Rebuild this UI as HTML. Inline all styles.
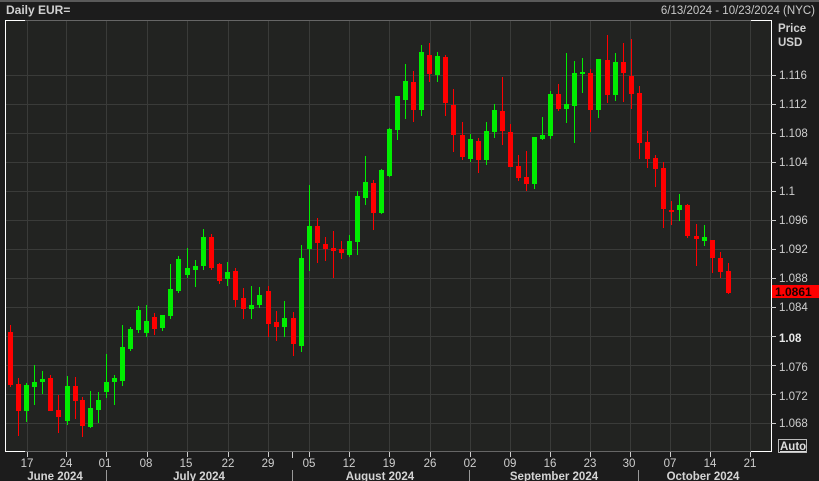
<!DOCTYPE html>
<html><head><meta charset="utf-8"><style>
html,body{margin:0;padding:0;background:#1c1c1c;width:819px;height:481px;overflow:hidden}
svg{display:block}
text{font-family:"Liberation Sans Narrow","Liberation Sans",sans-serif;}
</style></head><body>
<svg id="s" width="819" height="481" xmlns="http://www.w3.org/2000/svg">
<rect x="0" y="0" width="819" height="481" fill="#1c1c1c"/>
<rect x="0" y="0" width="819" height="2" fill="#5a5a5a"/>
<rect x="5" y="20" width="766" height="432" fill="#222321"/>
<g id="grid" stroke="#3a3b39" stroke-width="1"></g>
<g id="c"></g>
<!-- frame -->
<line x1="5" y1="20.5" x2="771" y2="20.5" stroke="#666" />
<line x1="5" y1="451.5" x2="771" y2="451.5" stroke="#666" />
<line x1="5" y1="20.5" x2="25" y2="20.5" stroke="#fff" />
<line x1="751" y1="20.5" x2="771" y2="20.5" stroke="#fff" />
<line x1="5" y1="451.5" x2="25" y2="451.5" stroke="#fff" />
<line x1="751" y1="451.5" x2="771" y2="451.5" stroke="#fff" />
<line x1="5.5" y1="20" x2="5.5" y2="452" stroke="#fff" />
<line x1="771.5" y1="20" x2="771.5" y2="452" stroke="#fff" />
<g id="ax" stroke="#ccc"></g>
<text x="6" y="14" fill="#d0d0d0" font-size="12" font-weight="bold">Daily EUR=</text>
<text x="815" y="14" fill="#c8c8c8" font-size="11.5" text-anchor="end">6/13/2024 - 10/23/2024 (NYC)</text>
<text x="778" y="32" fill="#d0d0d0" font-size="11.5" font-weight="bold">Price</text>
<text x="778" y="46" fill="#d0d0d0" font-size="11.5" font-weight="bold">USD</text>
<g fill="#cfcfcf" font-size="11.5" id="yl">
<text x="779" y="79">1.116</text><text x="779" y="108">1.112</text><text x="779" y="137">1.108</text>
<text x="779" y="166">1.104</text><text x="779" y="195">1.1</text><text x="779" y="224">1.096</text>
<text x="779" y="253">1.092</text><text x="779" y="282">1.088</text><text x="779" y="311">1.084</text>
<text x="779" y="342" font-weight="bold" fill="#e8e8e8">1.08</text><text x="779" y="371">1.076</text>
<text x="779" y="400">1.072</text><text x="779" y="427">1.068</text>
</g>
<rect x="772" y="285" width="47" height="13" fill="#f00"/>
<text x="775" y="296" fill="#1a0000" font-size="12" font-weight="bold">1.0861</text>
<rect x="778.5" y="439.5" width="28" height="13" fill="none" stroke="#bbb"/>
<text x="780" y="450" fill="#ddd" font-size="11.5" font-weight="bold" text-decoration="underline">Auto</text>
<g fill="#cfcfcf" font-size="11.5" text-anchor="middle">
<text x="27" y="467">17</text><text x="66" y="467">24</text><text x="105" y="467">01</text>
<text x="146" y="467">08</text><text x="186" y="467">15</text><text x="228" y="467">22</text>
<text x="268" y="467">29</text><text x="309" y="467">05</text><text x="349" y="467">12</text>
<text x="389" y="467">19</text><text x="430" y="467">26</text><text x="470" y="467">02</text>
<text x="510" y="467">09</text><text x="550" y="467">16</text><text x="590" y="467">23</text>
<text x="629" y="467">30</text><text x="670" y="467">07</text><text x="710" y="467">14</text>
<text x="750" y="467">21</text>
</g>
<g fill="#d4d4d4" font-size="11.5" font-weight="bold" text-anchor="middle">
<text x="55" y="480">June 2024</text><text x="199" y="480">July 2024</text>
<text x="380" y="480">August 2024</text><text x="554" y="480">September 2024</text>
<text x="703" y="480">October 2024</text>
</g>
</svg>
<script>
var ns="http://www.w3.org/2000/svg";
function el(p,t,a){var e=document.createElementNS(ns,t);for(var k in a)e.setAttribute(k,a[k]);p.appendChild(e);return e;}
var g=document.getElementById('grid');
[75,104,133,162,191,220,249,278,307,336,365,394,423].forEach(function(y){el(g,'line',{x1:5,x2:771,y1:y+.5,y2:y+.5});});
var wx=[27,66,106,147,187,228,268,309,349,389,430,470,510,550,590,630,670,710,750];
wx.forEach(function(x){el(g,'line',{x1:x+.5,x2:x+.5,y1:21,y2:451});});
var ax=document.getElementById('ax');
wx.forEach(function(x){el(ax,'line',{x1:x+.5,x2:x+.5,y1:452,y2:457});});
[75,104,133,162,191,220,249,278,307,336,365,394,423].forEach(function(y){el(ax,'line',{x1:771,x2:776,y1:y+.5,y2:y+.5});});
[106,292,469,638].forEach(function(x){el(ax,'line',{x1:x+.5,x2:x+.5,y1:470,y2:481,stroke:'#999'});});
el(ax,'line',{x1:292.5,x2:292.5,y1:452,y2:458});
var d=[
[9.5,332,385,325,387,'r'],[17.5,384,411,378,436,'r'],[25.5,385,411,383,422,'g'],[33.5,382,387,365,405,'g'],
[41.5,379,382,371,394,'g'],[49.5,378,411,375,411,'r'],[57.5,410,417,395,433,'r'],[66.5,386,421,376,425,'g'],
[74.5,386,401,377,419,'r'],[82,400,426,397,437,'r'],[90,408,427,391,428,'g'],[98,400,410,392,423,'g'],
[106,382,392,354,398,'g'],[114,378,382,375,405,'g'],[122,347,381,325,386,'g'],[130,329,349,327,351,'g'],
[138,310,330,306,333,'g'],[146,321,333,305,337,'g'],[154,317,329,313,335,'r'],[162,315,328,315,331,'g'],
[170,289,316,264,319,'g'],[178,259,291,256,293,'g'],[186.5,268,275,248,278,'g'],[195,266,270,260,287,'g'],
[203,237,266,229,270,'g'],[211,237,268,234,270,'r'],[219,264,281,263,284,'r'],[227,272,279,262,286,'g'],
[235,271,300,268,307,'r'],[243,298,309,288,319,'r'],[251,305,309,286,319,'g'],[259,295,305,287,308,'g'],
[267.5,291,324,286,337,'r'],[275.5,322,327,311,341,'r'],[283.5,318,327,301,337,'g'],[292.5,318,344,312,356,'r'],
[300.5,258,346,245,352,'g'],[308.5,226,249,185,271,'g'],[316.5,226,243,218,263,'r'],[324.5,244,249,237,261,'r'],
[332.5,248,251,231,278,'r'],[340.5,249,253,241,259,'r'],[348.5,241,255,235,257,'g'],[356.5,196,242,191,255,'g'],
[364.5,182,198,156,205,'g'],[372.5,183,213,180,230,'r'],[380.5,170,213,169,214,'g'],[388.5,129,176,128,177,'g'],
[397,96,130,96,140,'g'],[405,81,100,64,119,'g'],[413,82,110,71,122,'r'],[421,52,110,45,116,'g'],
[429,55,74,43,82,'r'],[437,56,75,52,82,'g'],[445,57,103,55,116,'r'],[453,105,135,89,152,'r'],
[461.5,135,157,122,160,'r'],[469.5,139,159,134,162,'g'],[477.5,141,160,138,173,'r'],[485.5,131,160,122,165,'g'],
[493.5,110,132,104,138,'g'],[501.5,111,131,77,145,'r'],[509.5,132,167,124,167,'r'],[518,166,178,155,181,'r'],
[526,177,184,151,191,'r'],[534,137,184,137,189,'g'],[542,135,139,117,140,'g'],[550,94,136,91,139,'g'],
[558,94,109,84,111,'r'],[566,104,109,53,123,'g'],[574,73,106,61,143,'g'],[582,72,74,58,93,'g'],
[590,73,110,69,132,'r'],[598,59,110,59,118,'g'],[607,60,95,35,103,'r'],[615,62,95,53,101,'g'],
[623,62,73,43,102,'r'],[631,76,94,39,109,'r'],[639,93,143,86,159,'r'],[647,142,159,131,168,'r'],
[655,158,169,155,187,'r'],[663,168,209,162,228,'r'],[671,210,211,201,225,'r'],[679,205,210,194,221,'g'],
[687,205,236,204,238,'r'],[695.5,236,239,224,266,'r'],[703.5,237,241,225,246,'g'],[711.5,240,258,240,273,'r'],
[720,258,272,252,278,'r'],[728,271,293,263,294,'r']];
var c=document.getElementById('c');
d.forEach(function(a){var col=a[5]=='g'?'#00ee00':'#ff0000';var x=Math.round(a[0]);
el(c,'rect',{x:x,y:a[3],width:1,height:Math.max(1,a[4]-a[3]),fill:col});
el(c,'rect',{x:x-2,y:a[1],width:5,height:Math.max(2,a[2]-a[1]),fill:col});});
</script>
</body></html>
